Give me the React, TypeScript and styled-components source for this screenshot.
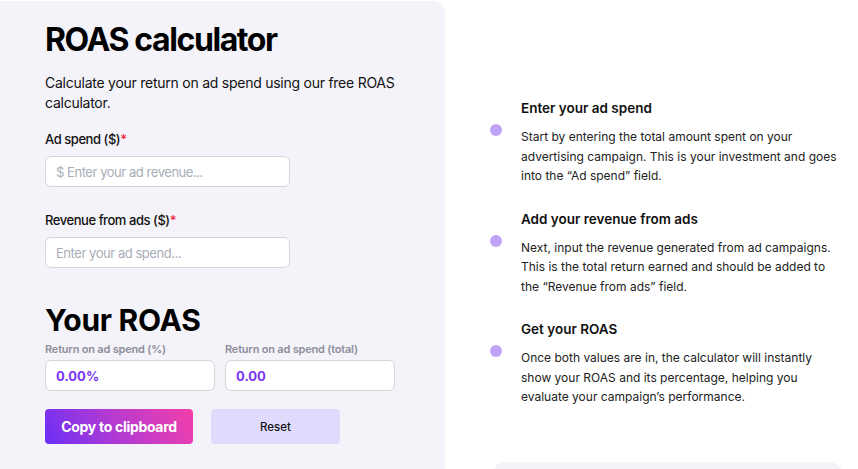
import React from "react";
import styled, { createGlobalStyle } from "styled-components";

const Global = createGlobalStyle`
  html, body { margin: 0; padding: 0; background: #ffffff; }
  body { font-family: Inter, "Noto Sans", Arial, sans-serif; color: #111; overflow: hidden; }
  * { box-sizing: border-box; }
`;

const Page = styled.div`
  display: flex;
  align-items: flex-start;
  width: 858px;
  height: 469px;
  overflow: hidden;
`;

const Calculator = styled.section`
  width: 445px;
  flex-shrink: 0;
  margin-top: 1px;
  height: 520px;
  background: #f4f3f9;
  border-top-right-radius: 12px;
  padding: 20px 0 0 45px;
  display: flex;
  flex-direction: column;
`;

const Title = styled.h1`
  margin: 0;
  font-size: 32px;
  line-height: 38px;
  font-weight: 700;
  letter-spacing: -1.4px;
  color: #000;
`;

const Intro = styled.p`
  margin: 14px 0 0;
  font-size: 14px;
  line-height: 20px;
  letter-spacing: -0.25px;
  width: 380px;
  color: #111;
`;

const Field = styled.div<{ $top: number }>`
  display: flex;
  flex-direction: column;
  margin-top: ${(p) => p.$top}px;
`;

const Label = styled.label`
  font-size: 13px;
  line-height: 16px;
  font-weight: 500;
  letter-spacing: -0.45px;
  color: #111;
  margin-bottom: 9px;
`;

const Star = styled.span`
  color: #f0263c;
`;

const Input = styled.input`
  width: 245px;
  height: 31px;
  border: 1px solid #d6d6de;
  border-radius: 6px;
  background: #fff;
  padding: 0 10px;
  font-family: inherit;
  font-size: 13px;
  letter-spacing: -0.45px;
  color: #111;
  outline: none;
  &::placeholder { color: #a9adb9; }
`;

const ResultTitle = styled.h2`
  margin: 35px 0 0;
  font-size: 30px;
  line-height: 34px;
  font-weight: 700;
  letter-spacing: -0.3px;
  color: #000;
`;

const Outputs = styled.div`
  display: flex;
  gap: 10px;
  margin-top: 5px;
`;

const Output = styled.div`
  display: flex;
  flex-direction: column;
  width: 170px;
`;

const OutLabel = styled.span`
  font-size: 11px;
  line-height: 14px;
  font-weight: 600;
  letter-spacing: -0.2px;
  color: #8e8e9a;
  margin-bottom: 4px;
`;

const OutBox = styled.div`
  height: 31px;
  border: 1px solid #d6d6de;
  border-radius: 6px;
  background: #fff;
  padding: 0 10px;
  display: flex;
  align-items: center;
  font-size: 13px;
  font-weight: 700;
  color: #7a36f4;
`;

const Buttons = styled.div`
  display: flex;
  gap: 18px;
  margin-top: 18px;
`;

const Button = styled.button<{ $primary?: boolean }>`
  height: 35px;
  border: none;
  border-radius: 4px;
  font-family: inherit;
  cursor: pointer;
  width: ${(p) => (p.$primary ? 148 : 129)}px;
  background: ${(p) =>
    p.$primary ? "linear-gradient(60deg, #6a2ff6 0%, #b73bd0 50%, #f43fa9 100%)" : "#e0dafd"};
  color: ${(p) => (p.$primary ? "#fff" : "#111")};
  font-size: ${(p) => (p.$primary ? 14 : 11.5)}px;
  letter-spacing: ${(p) => (p.$primary ? -0.3 : 0)}px;
  font-weight: ${(p) => (p.$primary ? 700 : 500)};
`;

const Steps = styled.section`
  margin-left: 45px;
  width: 353px;
  padding-top: 99px;
  display: flex;
  flex-direction: column;
`;

const Step = styled.div`
  display: grid;
  grid-template-columns: 31px 1fr;
  margin-bottom: 24px;
`;

const Dot = styled.span`
  width: 12px;
  height: 12px;
  border-radius: 50%;
  background: #c1a2f9;
  margin-top: 25px;
`;

const StepTitle = styled.h3`
  margin: 0 0 10px;
  font-size: 13.5px;
  line-height: 18px;
  font-weight: 600;
  color: #111;
`;

const StepText = styled.p`
  margin: 0;
  font-size: 12px;
  line-height: 19.5px;
  color: #222;
`;

const Footer = styled.div`
  margin-top: 31px;
  margin-left: 2px;
  height: 60px;
  background: #f4f3f9;
  border-radius: 14px;
`;

const steps = [
  {
    title: "Enter your ad spend",
    text: "Start by entering the total amount spent on your advertising campaign. This is your investment and goes into the “Ad spend” field.",
  },
  {
    title: "Add your revenue from ads",
    text: "Next, input the revenue generated from ad campaigns. This is the total return earned and should be added to the “Revenue from ads” field.",
  },
  {
    title: "Get your ROAS",
    text: "Once both values are in, the calculator will instantly show your ROAS and its percentage, helping you evaluate your campaign’s performance.",
  },
];

export default function App() {
  return (
    <Page>
      <Global />
      <Calculator>
        <Title>ROAS calculator</Title>
        <Intro>Calculate your return on ad spend using our free ROAS calculator.</Intro>
        <Field $top={18}>
          <Label>
            Ad spend ($)<Star>*</Star>
          </Label>
          <Input placeholder="$ Enter your ad revenue..." />
        </Field>
        <Field $top={25}>
          <Label>
            Revenue from ads ($)<Star>*</Star>
          </Label>
          <Input placeholder="Enter your ad spend..." />
        </Field>
        <ResultTitle>Your ROAS</ResultTitle>
        <Outputs>
          <Output>
            <OutLabel>Return on ad spend (%)</OutLabel>
            <OutBox>0.00%</OutBox>
          </Output>
          <Output>
            <OutLabel>Return on ad spend (total)</OutLabel>
            <OutBox>0.00</OutBox>
          </Output>
        </Outputs>
        <Buttons>
          <Button $primary>Copy to clipboard</Button>
          <Button>Reset</Button>
        </Buttons>
      </Calculator>
      <Steps>
        {steps.map((s) => (
          <Step key={s.title}>
            <Dot />
            <div>
              <StepTitle>{s.title}</StepTitle>
              <StepText>{s.text}</StepText>
            </div>
          </Step>
        ))}
        <Footer />
      </Steps>
    </Page>
  );
}
